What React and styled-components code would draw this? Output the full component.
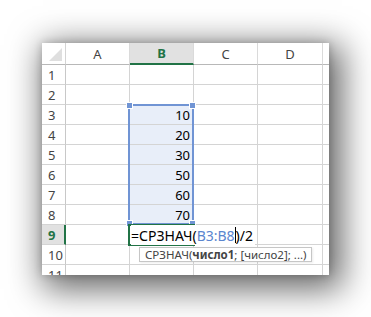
import React from "react";
import styled, { createGlobalStyle, css } from "styled-components";

const Global = createGlobalStyle`
  html, body { margin: 0; padding: 0; background: #fff; }
  body { font-family: "Noto Sans", "Open Sans", sans-serif; }
`;

const Page = styled.div`
  width: 371px;
  height: 317px;
  padding: 43px 0 0 42px;
  box-sizing: border-box;
  background: #fff;
  overflow: hidden;
`;

const Sheet = styled.div`
  position: relative;
  width: 287px;
  height: 232px;
  background: #fff;
  overflow: hidden;
  box-shadow: 7px 8px 32px 6px rgba(0, 0, 0, 0.6), 0 0 8px rgba(0, 0, 0, 0.2);
`;

const Grid = styled.div`
  display: grid;
  grid-template-columns: 24px 64px 64px 64px 65px 7px;
  grid-template-rows: 22px repeat(11, 20px);
`;

const Cell = styled.div`
  box-sizing: border-box;
  border-right: 1px solid #d4d4d4;
  border-bottom: 1px solid #d4d4d4;
  font-size: 13px;
  color: #000;
  display: flex;
  align-items: center;
  justify-content: flex-end;
  padding-right: 3px;
  background: ${(p) => (p.$sel ? "#e8eef9" : "#fff")};
`;

const ColHead = styled.div`
  box-sizing: border-box;
  border-right: 1px solid #dadada;
  border-bottom: 1px solid #b8b8b8;
  font-size: 13px;
  color: #444;
  display: flex;
  align-items: center;
  justify-content: center;
  background: #fff;
  ${(p) =>
    p.$active &&
    css`
      background: #e1e1e1;
      color: #217346;
      font-weight: 700;
      border-bottom: 2px solid #217346;
    `}
`;

const Corner = styled.div`
  box-sizing: border-box;
  border-right: 1px solid #d4d4d4;
  border-bottom: 1px solid #b8b8b8;
  position: relative;
  background: #fff;
`;

const Tri = styled.div`
  position: absolute;
  right: 3px;
  bottom: 3px;
  width: 0;
  height: 0;
  border-left: 13px solid transparent;
  border-bottom: 13px solid #dfdfdf;
`;

const RowHead = styled.div`
  box-sizing: border-box;
  border-right: 1px solid #c8c8c8;
  border-bottom: 1px solid #d4d4d4;
  font-size: 13px;
  color: #444;
  display: flex;
  align-items: center;
  padding-left: 6px;
  background: #fff;
  ${(p) =>
    p.$active &&
    css`
      background: #e1e1e1;
      color: #217346;
      font-weight: 700;
      border-right: 2px solid #217346;
    `}
`;

const Selection = styled.div`
  position: absolute;
  left: 86px;
  top: 61px;
  width: 66px;
  height: 121px;
  box-sizing: border-box;
  border: 2px solid #7094d4;
  pointer-events: none;
`;

const Handle = styled.div`
  position: absolute;
  width: 5px;
  height: 5px;
  background: #7094d4;
  border: 1px solid #fff;
  ${(p) => (p.$x === "l" ? "left: -4px;" : "right: -4px;")}
  ${(p) => (p.$y === "t" ? "top: -4px;" : "bottom: -4px;")}
`;

const Active = styled.div`
  position: absolute;
  left: 86px;
  top: 181px;
  width: 67px;
  height: 22px;
  box-sizing: border-box;
  border: 2px solid #217346;
  background: #fff;
`;

const Formula = styled.div`
  position: absolute;
  left: 89px;
  top: 182px;
  height: 20px;
  display: flex;
  align-items: center;
  font-size: 14px;
  color: #000;
  white-space: nowrap;
  background: #fff;
  padding-right: 2px;
`;

const Ref = styled.span`
  color: #5b86cf;
`;

const Caret = styled.span`
  display: inline-block;
  width: 1px;
  height: 16px;
  background: #000;
`;

const Tip = styled.div`
  position: absolute;
  left: 97px;
  top: 204px;
  height: 15px;
  box-sizing: border-box;
  padding: 0 4px 0 5px;
  border: 1px solid #c6c6c6;
  background: #fff;
  font-size: 11.5px;
  line-height: 13px;
  color: #444;
  white-space: nowrap;
  box-shadow: 1px 1px 2px rgba(0, 0, 0, 0.08);
`;

const values = { 3: 10, 4: 20, 5: 30, 6: 50, 7: 60, 8: 70 };

export default function App() {
  const cols = ["A", "B", "C", "D"];
  const rows = Array.from({ length: 11 }, (_, i) => i + 1);
  return (
    <Page>
      <Global />
      <Sheet>
        <Grid>
          <Corner>
            <Tri />
          </Corner>
          {cols.map((c) => (
            <ColHead key={c} $active={c === "B"}>
              {c}
            </ColHead>
          ))}
          <ColHead />
          {rows.map((r) => (
            <React.Fragment key={r}>
              <RowHead $active={r === 9}>{r}</RowHead>
              <Cell />
              <Cell $sel={r >= 3 && r <= 8}>{values[r] ?? ""}</Cell>
              <Cell />
              <Cell />
              <Cell />
            </React.Fragment>
          ))}
        </Grid>
        <Selection>
          <Handle $x="l" $y="t" />
          <Handle $x="r" $y="t" />
          <Handle $x="l" $y="b" />
          <Handle $x="r" $y="b" />
        </Selection>
        <Active />
        <Formula>
          =СРЗНАЧ(<Ref>B3:B8</Ref>
          <Caret />)/2
        </Formula>
        <Tip>
          СРЗНАЧ(<b>число1</b>; [число2]; ...)
        </Tip>
      </Sheet>
    </Page>
  );
}
